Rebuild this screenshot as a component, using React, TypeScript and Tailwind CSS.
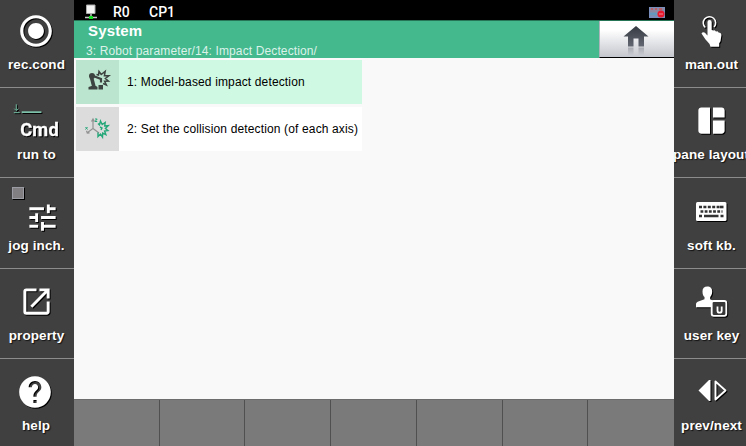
import type { ReactNode } from 'react';
import { MdRadioButtonChecked, MdTune, MdOpenInNew, MdHelp, MdSpaceDashboard } from 'react-icons/md';

type KeyProps = { label: string; height: string; iconTop: string; labelTop: string; shift: string; last?: boolean; children: ReactNode };

function SideKey({ label, height, iconTop, labelTop, shift, last, children }: KeyProps) {
  return (
    <button
      className={`flex w-full shrink-0 flex-col items-center text-white ${height} ${shift} ${last ? '' : 'border-b border-[#8c8c8c]'}`}
    >
      <span className={`flex w-full shrink-0 justify-center drop-shadow-[1px_1px_0.5px_#000] ${labelTop} ${iconTop}`}>{children}</span>
      <span className="flex h-5 shrink-0 items-center whitespace-nowrap text-[13.5px] font-bold leading-5 tracking-[0.1px] [text-shadow:1px_1px_1px_#111]">
        {label}
      </span>
    </button>
  );
}

function RunToIcon() {
  return (
    <svg width="74" height="46" viewBox="0 0 74 46">
      <path d="M16.500 4v6M14.500 8.500l2 2 2-2M14 12.500h6" fill="none" stroke="#70b9a0" strokeWidth="1" />
      <path d="M22 12h20" stroke="#84cdb5" strokeWidth="1.600" />
      <text x="20.500" y="35.700" fontSize="18.500" fontWeight="700" fill="#fff" stroke="#fff" strokeWidth=".3" fontFamily="Roboto, sans-serif" textLength="39">
        Cmd
      </text>
    </svg>
  );
}

function TouchIcon() {
  return (
    <svg width="22" height="34" viewBox="0 0 22 34">
      <path d="M4.300 12.500a6.200 6.200 0 1 1 8.800-.5" fill="none" stroke="#fff" strokeWidth="1.600" />
      <path
        d="M6.500 7a2 2 0 0 1 4.200 0v8l1.800.4 1.200-.2 1.300 1.200 1.500-.1 1.200 1.300 1.800.3 1 1.800-1 6.500-1.300 2v3.500H9.500l-1-2.700-4-4.500-4-6c.8-1.500 2.600-1.600 3.700-.4l2.300 2.500z"
        fill="#fff"
      />
    </svg>
  );
}

function KeyboardIcon() {
  return (
    <svg width="31" height="20" viewBox="0 0 31 20">
      <rect width="30.500" height="19" rx="1.500" fill="#fff" />
      <path d="M3 5h21" stroke="#333" strokeWidth="2.600" strokeDasharray="3 1.400" />
      <path d="M24 5h3.500" stroke="#333" strokeWidth="2.600" />
      <path d="M4.500 9.500h22" stroke="#333" strokeWidth="2.600" strokeDasharray="2.800 1.400" />
      <path d="M3 14h3M8 14h14.500M24.500 14h3" stroke="#333" strokeWidth="2.600" />
    </svg>
  );
}

function UserKeyIcon() {
  return (
    <svg width="32" height="32" viewBox="0 0 32 32">
      <path
        d="M6.500 5.500C6.500 2 8.200.5 11.300.5S16.200 2 16.200 5.500c0 3-1.300 4.800-2 5.500v2.300l3 1.500c-1.500.8-2.200 2-2.200 3.500v3H0v-3c0-1.600 1-2.300 3-3l5.500-2V11c-1.200-1-2-2.500-2-5.500z"
        fill="#fff"
      />
      <rect x="15.700" y="15" width="14.600" height="14.800" rx="2" fill="#383838" stroke="#fff" strokeWidth="1.800" />
      <path d="M21.500 20.500v4.200q0 2 2.100 2t2.100-2v-4.200" fill="none" stroke="#fff" strokeWidth="1.800" />
    </svg>
  );
}

function PrevNextIcon() {
  return (
    <svg width="30" height="24" viewBox="0 0 30 24">
      <path d="M.5 11.500 11 1h1.500v21H11z" fill="#fff" />
      <path d="M17.500 2.500v18L27.500 11.500z" fill="none" stroke="#fff" strokeWidth="1.900" strokeLinejoin="round" />
    </svg>
  );
}

function RobotImpactIcon() {
  return (
    <svg width="43" height="44" viewBox="0 0 43 44" fill="none" stroke="#3c4340">
      <path d="M12.500 29.500V27l3-1h4.500l1.500 1v2.500zM22.500 25H27v4.500h-4.500z" fill="#3c4340" stroke="none" />
      <path d="m18 27-2.500-9.500" strokeWidth="3.600" />
      <circle cx="16" cy="16" r="3" fill="#3c4340" stroke="none" />
      <path d="m16 15.500 9 3.500v3.500" strokeWidth="2.200" />
      <path d="m20.500 14.500 2 .5.500-3.500 2.200 3 4-3.200-.8 4.400 4.500.1-3.500 2.700 3 2.500-3.800.2 1.800 3.800-3.400-1.500" strokeWidth="1.500" />
    </svg>
  );
}

function AxisImpactIcon() {
  return (
    <svg width="43" height="44" viewBox="0 0 43 44" fill="none">
      <path d="M17 13v8.500l-5.500 4M17 21.500l6 4.500M15.500 14.500 17 12l1.500 2.500M10.500 23.800l.8 2.200 2.300-.2" stroke="#929292" strokeWidth="1.200" />
      <path d="m9.500 20 2 2.500m0-2.500-2 2.500M19 12h2.200L19 14.500h2.200" stroke="#24a779" strokeWidth="1" />
      <path
        d="m22 16.500 1.500 1.500 1-4 1.700 3.500 3-2-.5 3.500 3.500-.3-2.800 2.800 2.500 2-3.300.5 1.300 3.700-3.200-1.500-.2 3.800-2-3-2.500 2.500v-4M24 20l2 1-1 2"
        stroke="#24a779"
        strokeWidth="1.400"
      />
    </svg>
  );
}

function HomeButton() {
  return (
    <button className="flex h-[37px] w-[75px] justify-center border-b border-black border-l border-l-[#adb3ba] bg-linear-to-b from-white from-25% to-[#c5c7ce]">
      <svg className="mr-[2px]" width="28" height="37" viewBox="0 0 28 37">
        <defs>
          <linearGradient id="house" x2="0" y2="1">
            <stop stopColor="#363b43" />
            <stop offset="1" stopColor="#626771" />
          </linearGradient>
          <linearGradient id="reflection" x2="0" y2="1">
            <stop stopColor="#777b84" stopOpacity=".5" />
            <stop offset="1" stopColor="#777b84" stopOpacity="0" />
          </linearGradient>
        </defs>
        <path d="M14 5 26.500 15.500H22v10h-5.500v-8h-5v8H6v-10H1.500z" fill="url(#house)" />
        <path d="M6 26.500h5.500v8H6zM16.500 26.500H22v8h-5.500z" fill="url(#reflection)" />
      </svg>
    </button>
  );
}

function MenuItem({ text, selected, children }: { text: string; selected?: boolean; children: ReactNode }) {
  return (
    <div className={`flex h-11 w-[286px] items-center ${selected ? 'bg-[#d0f9e3]' : 'bg-white'}`}>
      <div className={`h-11 w-[43px] shrink-0 ${selected ? 'bg-[#bce5cf]' : 'bg-[#dcdcdc]'}`}>{children}</div>
      <span className="whitespace-nowrap pl-2 text-[12px] tracking-[0.14px] text-black">{text}</span>
    </div>
  );
}

export default function App() {
  return (
    <div className="flex h-[446px] w-[746px] overflow-hidden bg-[#404040] font-['Liberation_Sans',Arial,sans-serif]">
      <aside className="flex w-[74px] shrink-0 flex-col">
        <SideKey label="rec.cond" height="h-[88px]" labelTop="h-[55px]" iconTop="pt-[12px] pr-[2px]" shift="pr-px">
          <MdRadioButtonChecked size={38} />
        </SideKey>
        <SideKey label="run to" height="h-[90px]" labelTop="h-[57px]" iconTop="pt-[12px]" shift="pr-px">
          <RunToIcon />
        </SideKey>
        <SideKey label="jog inch." height="h-[91px]" labelTop="h-[58px]" iconTop="pl-[12px] pt-[9px]" shift="pr-px">
          <span className="mr-[1px] h-3 w-3 shrink-0 border border-[#9b9ca4] bg-[#817f82]" />
          <MdTune size={35} className="mr-[13px] mt-[13px] shrink-0" />
        </SideKey>
        <SideKey label="property" height="h-[90px]" labelTop="h-[57px]" iconTop="pt-[15px]" shift="pr-px">
          <MdOpenInNew size={35} />
        </SideKey>
        <SideKey label="help" height="h-[87px]" labelTop="h-[57px]" iconTop="pt-[14px] pr-[2px]" shift="pr-[2px]" last>
          <MdHelp size={38} />
        </SideKey>
      </aside>

      <main className="flex w-[600px] shrink-0 flex-col bg-[#f9f9f9]">
        <div className="flex h-5 shrink-0 items-center bg-black text-white">
          <svg className="ml-[10px]" width="14" height="20" viewBox="0 0 14 20">
            <path d="M2.500 5h8.500v8.500H2.500z" fill="#f4f4f4" stroke="#aaa" />
            <path d="M1 17.500h12M7 14v4" stroke="#c5c5c5" strokeWidth="1.500" />
            <path d="M5 16h4v3H5z" fill="#12dd22" />
          </svg>
          <span className="ml-[15px] w-9 pt-[4px] font-['Roboto'] text-[14px] font-medium leading-4">R0</span>
          <span className="flex-1 pt-[4px] font-['Roboto'] text-[14px] font-medium leading-4">CP1</span>
          <svg className="mr-[9px] mt-[5px]" width="16" height="11" viewBox="0 0 16 11">
            <path d="M0 0h16v11H0z" fill="#798eba" />
            <path d="M1 1h14v8H1z" fill="#8e87a1" />
            <path d="M2 2h2M6 2h2M10 2h3" stroke="#c75557" strokeWidth="1.500" />
            <path d="M1 7h7" stroke="#6499bd" strokeWidth="3" />
            <circle cx="12" cy="7" r="3.500" fill="#e8182d" />
            <path d="M10 7h4" stroke="#f08794" />
          </svg>
        </div>
        <header className="flex h-[38px] shrink-0 justify-between border-t border-[#277557] bg-[#45b98e]">
          <div className="flex flex-col pl-3 text-white">
            <h1 className="pl-[2px] text-[15px] font-bold leading-[19px] tracking-[0.15px]">System</h1>
            <p className="mt-[2px] whitespace-nowrap text-[12px] leading-[18px] tracking-[0.12px] text-[#dcf2e9]">
              3: Robot parameter/14: Impact Dectection/
            </p>
          </div>
          <HomeButton />
        </header>
        <div className="flex flex-1 flex-col gap-[3px] pl-[2px] pt-[2px]">
          <MenuItem text="1: Model-based impact detection" selected>
            <RobotImpactIcon />
          </MenuItem>
          <MenuItem text="2: Set the collision detection (of each axis)">
            <AxisImpactIcon />
          </MenuItem>
        </div>
        <footer className="grid h-[47px] shrink-0 grid-cols-7 border-t border-[#6d6d6d] bg-[#7a7a7a]">
          {Array.from({ length: 7 }, (_, i) => (
            <button key={i} className="border-r border-[#505050] last:border-r-0" />
          ))}
        </footer>
      </main>

      <aside className="flex w-[72px] shrink-0 flex-col">
        <SideKey label="man.out" height="h-[88px]" labelTop="h-[55px]" iconTop="pt-[15px] pl-[1px]" shift="pl-[3px]">
          <TouchIcon />
        </SideKey>
        <SideKey label="pane layout" height="h-[90px]" labelTop="h-[57px]" iconTop="pt-[15px]" shift="pl-[2px]">
          <MdSpaceDashboard size={35} />
        </SideKey>
        <SideKey label="soft kb." height="h-[91px]" labelTop="h-[58px]" iconTop="pt-[24px]" shift="pl-[3px]">
          <KeyboardIcon />
        </SideKey>
        <SideKey label="user key" height="h-[90px]" labelTop="h-[57px]" iconTop="pt-[17px]" shift="pl-[3px]">
          <UserKeyIcon />
        </SideKey>
        <SideKey label="prev/next" height="h-[87px]" labelTop="h-[57px]" iconTop="pt-[20px] pl-[2px]" shift="pl-[3px]" last>
          <PrevNextIcon />
        </SideKey>
      </aside>
    </div>
  );
}
